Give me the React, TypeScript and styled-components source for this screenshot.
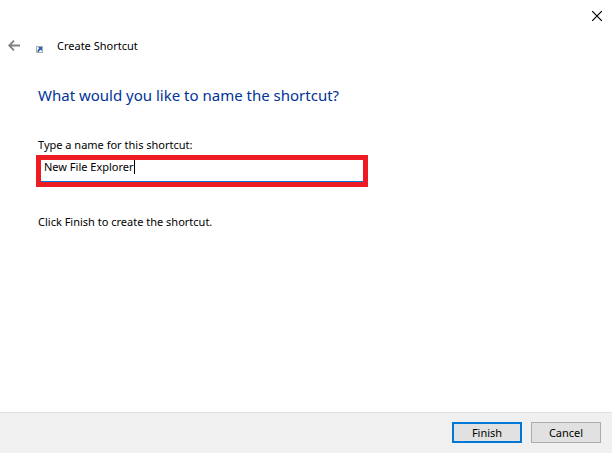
import React, { useLayoutEffect, useRef, useState } from "react";
import styled, { createGlobalStyle } from "styled-components";

const GlobalStyle = createGlobalStyle`
  * { box-sizing: border-box; }
  body { margin: 0; background: #fff; font-family: "Noto Sans", "Open Sans", sans-serif; font-size: 11px; color: #000; }
`;
const Dialog = styled.form`
  display: flex;
  flex-direction: column;
  min-height: 100vh;
  background: #fff;
`;
const TitleBar = styled.div`
  display: flex;
  justify-content: flex-end;
  height: 31px;
`;
const IconButton = styled.button<{ $width: number }>`
  display: flex;
  align-items: center;
  justify-content: center;
  width: ${({ $width }) => $width}px;
  padding: 0;
  border: 0;
  background: transparent;
`;
const Header = styled.header`
  display: flex;
  align-items: center;
  height: 29px;
`;
const ShortcutIcon = styled.svg`
  margin: 7px 14px 0 8px;
`;
const Caption = styled.span`
  line-height: 16px;
`;
const Content = styled.main`
  flex: 1;
  padding: 23px 38px;
`;
const Heading = styled.h1`
  margin: 0 0 30px;
  font-size: 15px;
  line-height: 24px;
  font-weight: 400;
  color: #003399;
`;
const Label = styled.label`
  display: block;
  line-height: 16px;
`;
const Field = styled.div`
  position: relative;
  width: 62%;
  margin: 2px 0 0 -2px;
  border: 5px solid #ed1c24;
`;
const NameInput = styled.input`
  display: block;
  width: 100%;
  height: 22px;
  padding: 0 3px 8px;
  border: 0;
  border-bottom: 1px solid #0078d7;
  outline: 0;
  font: inherit;
  caret-color: transparent;
  background: #fff;
`;
const Caret = styled.span`
  position: absolute;
  top: 0;
  width: 1px;
  height: 14px;
  background: #000;
  pointer-events: none;
`;
const Hint = styled.p`
  margin: 27px 0 0;
  line-height: 16px;
`;
const Footer = styled.footer`
  display: flex;
  justify-content: flex-end;
  gap: 9px;
  padding: 9px 11px 10px;
  border-top: 1px solid #dfdfdf;
  background: #f0f0f0;
`;
const ActionButton = styled.button<{ $primary?: boolean }>`
  width: 70px;
  height: 21px;
  padding: 0;
  border: ${({ $primary }) => ($primary ? "2px solid #0078d7" : "1px solid #adadad")};
  background: #e1e1e1;
  font: inherit;
  line-height: 16px;
  color: #000;
`;

export default function App() {
  const [name, setName] = useState("New File Explorer");
  const [caret, setCaret] = useState(0);
  const input = useRef<HTMLInputElement>(null);

  useLayoutEffect(() => {
    const context = document.createElement("canvas").getContext("2d");
    if (!context || !input.current) return;
    const style = getComputedStyle(input.current);
    context.font = `${style.fontSize} ${style.fontFamily}`;
    setCaret(Math.ceil(parseInt(style.paddingLeft, 10) + context.measureText(name).width));
  }, [name]);

  return (
    <Dialog onSubmit={(e) => e.preventDefault()}>
      <GlobalStyle />
      <TitleBar>
        <IconButton $width={30} type="button" aria-label="Close">
          <svg width="10" height="10" viewBox="0 0 10 10" stroke="#000" strokeWidth="1.2"><path d="M0 0 10 10M10 0 0 10" /></svg>
        </IconButton>
      </TitleBar>
      <Header>
        <IconButton $width={28} type="button" aria-label="Back">
          <svg width="12" height="11" viewBox="0 0 12 11" fill="none" stroke="#808080" strokeWidth="1.8"><path d="M12 5.5H1M6 .7 1.2 5.5 6 10.3" /></svg>
        </IconButton>
        <ShortcutIcon width="7" height="7" viewBox="0 0 7 7" aria-hidden="true">
          <rect x=".5" y=".5" width="6" height="6" fill="#f4f6f8" stroke="#b0b0b0" />
          <path d="M2 1H6V5L4.800 3.800C3.600 4.300 3 5 3 6H1.500C1.300 4.500 2 3.200 3.300 2.300Z" fill="#2866b5" />
        </ShortcutIcon>
        <Caption>Create Shortcut</Caption>
      </Header>
      <Content>
        <Heading>What would you like to name the shortcut?</Heading>
        <Label htmlFor="shortcut-name">Type a name for this shortcut:</Label>
        <Field>
          <NameInput ref={input} id="shortcut-name" value={name} onChange={(e) => setName(e.target.value)} autoFocus />
          <Caret style={{ left: caret }} />
        </Field>
        <Hint>Click Finish to create the shortcut.</Hint>
      </Content>
      <Footer>
        <ActionButton $primary type="submit">Finish</ActionButton>
        <ActionButton type="button">Cancel</ActionButton>
      </Footer>
    </Dialog>
  );
}
